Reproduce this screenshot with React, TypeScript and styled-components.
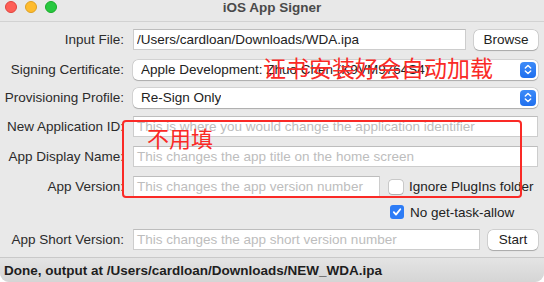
import styled, { createGlobalStyle } from 'styled-components';

const GlobalStyle = createGlobalStyle`
    html, body {
        margin: 0;
        padding: 0;
        background: #ffffff;
    }
    * {
        box-sizing: border-box;
    }
`;

const sysFont = `"Liberation Sans", Arial, sans-serif`;
const cjkFont = `"Noto Sans CJK SC", "Noto Sans", sans-serif`;

const StepperIcon = () => (
    <svg width="8" height="11" viewBox="0 0 8 11">
        <path
            d="M1.3 4 L4 1.4 L6.7 4 M1.3 7 L4 9.6 L6.7 7"
            fill="none"
            stroke="#fff"
            strokeWidth="1.4"
            strokeLinecap="round"
            strokeLinejoin="round"
        />
    </svg>
);

const CheckIcon = () => (
    <svg width="10" height="10" viewBox="0 0 10 10">
        <path
            d="M1.8 5.2 L4 7.6 L8.3 2.2"
            fill="none"
            stroke="#fff"
            strokeWidth="1.8"
            strokeLinecap="round"
            strokeLinejoin="round"
        />
    </svg>
);

const App = () => {
    return (
        <>
            <GlobalStyle />
            <Window>
                <TitleBar>
                    <Lights>
                        <Light $color="#fe5f57" $border="#e0443e" />
                        <Light $color="#febc2e" $border="#dea123" />
                        <Light $color="#28c840" $border="#1aab29" />
                    </Lights>
                    <Title>iOS App Signer</Title>
                </TitleBar>
                <Form>
                    <Row $top={7}>
                        <Label>Input File:</Label>
                        <Field>
                            <TextInput>
                                <Value>/Users/cardloan/Downloads/WDA.ipa</Value>
                            </TextInput>
                            <Button $width={64}>Browse</Button>
                        </Field>
                    </Row>
                    <Row $top={9}>
                        <Label>Signing Certificate:</Label>
                        <Field>
                            <Select>
                                <Value>Apple Development: Zhuo Chen (K9VM9764S4)</Value>
                                <Stepper>
                                    <StepperIcon />
                                </Stepper>
                            </Select>
                        </Field>
                    </Row>
                    <Row $top={7}>
                        <Label>Provisioning Profile:</Label>
                        <Field>
                            <Select>
                                <Value>Re-Sign Only</Value>
                                <Stepper>
                                    <StepperIcon />
                                </Stepper>
                            </Select>
                        </Field>
                    </Row>
                    <Row $top={8}>
                        <Label>New Application ID:</Label>
                        <Field>
                            <TextInput>
                                <Placeholder>
                                    This is where you would change the application identifier
                                </Placeholder>
                            </TextInput>
                        </Field>
                    </Row>
                    <Row $top={9}>
                        <Label>App Display Name:</Label>
                        <Field>
                            <TextInput>
                                <Placeholder>This changes the app title on the home screen</Placeholder>
                            </TextInput>
                        </Field>
                    </Row>
                    <Row $top={9}>
                        <Label>App Version:</Label>
                        <Field>
                            <TextInput $width={247}>
                                <Placeholder>This changes the app version number</Placeholder>
                            </TextInput>
                            <CheckRow $indent={1}>
                                <Checkbox />
                                <CheckText>Ignore PlugIns folder</CheckText>
                            </CheckRow>
                        </Field>
                    </Row>
                    <Row $top={7} $height={16}>
                        <span />
                        <Field>
                            <CheckRow $indent={257}>
                                <Checkbox $checked>
                                    <CheckIcon />
                                </Checkbox>
                                <CheckText>No get-task-allow</CheckText>
                            </CheckRow>
                        </Field>
                    </Row>
                    <Row $top={9}>
                        <Label>App Short Version:</Label>
                        <Field>
                            <TextInput>
                                <Placeholder>This changes the app short version number</Placeholder>
                            </TextInput>
                            <Button $width={50}>Start</Button>
                        </Field>
                    </Row>
                </Form>
                <StatusBar>Done, output at /Users/cardloan/Downloads/NEW_WDA.ipa</StatusBar>

                <NoteBox />
                <NoteText $left={147} $top={124} $size={22}>
                    不用填
                </NoteText>
                <NoteText $left={263} $top={54} $size={23}>
                    证书安装好会自动加载
                </NoteText>
            </Window>
        </>
    );
};

export default App;

const Window = styled.div`
    position: relative;
    width: 544px;
    height: 282px;
    background: #e9e9e9;
    border-bottom-left-radius: 9px;
    border-bottom-right-radius: 9px;
    overflow: hidden;
    display: flex;
    flex-direction: column;
    font-family: ${sysFont};
    font-size: 13.5px;
    color: #2a2a2a;
`;

const TitleBar = styled.div`
    position: relative;
    height: 22px;
    flex-shrink: 0;
    display: flex;
    align-items: center;
    justify-content: center;
    border-bottom: 1px solid #d2d2d2;
    background: #e8e8e8;
`;

const Lights = styled.div`
    position: absolute;
    left: 5px;
    top: 1px;
    display: flex;
    gap: 8px;
`;

const Light = styled.div<{ $color: string; $border: string }>`
    width: 12px;
    height: 12px;
    border-radius: 50%;
    background: ${(p) => p.$color};
    border: 0.5px solid ${(p) => p.$border};
`;

const Title = styled.div`
    font-weight: bold;
    font-size: 13.5px;
    color: #4a4a4a;
    margin-top: -6px;
`;

const Form = styled.div`
    flex: 1;
    display: flex;
    flex-direction: column;
    padding-right: 6px;
`;

const Row = styled.div<{ $top: number; $height?: number }>`
    display: grid;
    grid-template-columns: 124px 1fr;
    column-gap: 9px;
    align-items: center;
    height: ${(p) => p.$height ?? 21}px;
    margin-top: ${(p) => p.$top}px;
`;

const Label = styled.div`
    text-align: right;
    white-space: nowrap;
    color: #2b2b2b;
`;

const Field = styled.div`
    display: flex;
    align-items: center;
    gap: 8px;
    height: 100%;
    min-width: 0;
`;

const TextInput = styled.div<{ $width?: number }>`
    ${(p) => (p.$width ? `width: ${p.$width}px;` : 'flex: 1;')}
    height: 21px;
    background: #ffffff;
    border: 1px solid #cdcdcd;
    border-top-color: #bdbdbd;
    display: flex;
    align-items: center;
    padding: 0 3px;
    overflow: hidden;
    white-space: nowrap;
`;

const Value = styled.span`
    color: #222;
    white-space: nowrap;
    overflow: hidden;
`;

const Placeholder = styled.span`
    color: #bdbdbd;
    white-space: nowrap;
`;

const Button = styled.div<{ $width: number }>`
    width: ${(p) => p.$width}px;
    height: 20px;
    flex-shrink: 0;
    background: #ffffff;
    border-radius: 5px;
    box-shadow: 0 0 0 0.5px rgba(0, 0, 0, 0.18), 0 0.5px 1px rgba(0, 0, 0, 0.2);
    display: flex;
    align-items: center;
    justify-content: center;
    color: #222;
`;

const Select = styled.div`
    flex: 1;
    height: 20px;
    background: #ffffff;
    border-radius: 5px;
    box-shadow: 0 0 0 0.5px rgba(0, 0, 0, 0.16), 0 0.5px 1px rgba(0, 0, 0, 0.2);
    display: flex;
    align-items: center;
    justify-content: space-between;
    padding: 0 2px 0 8px;
    overflow: hidden;
`;

const Stepper = styled.div`
    width: 16px;
    height: 16px;
    flex-shrink: 0;
    border-radius: 4px;
    background: linear-gradient(#3d8bf8, #1f6fee);
    display: flex;
    align-items: center;
    justify-content: center;
`;

const CheckRow = styled.div<{ $indent: number }>`
    display: flex;
    align-items: center;
    gap: 6px;
    margin-left: ${(p) => p.$indent}px;
`;

const Checkbox = styled.div<{ $checked?: boolean }>`
    width: 14px;
    height: 14px;
    border-radius: 3px;
    display: flex;
    align-items: center;
    justify-content: center;
    background: ${(p) => (p.$checked ? '#2d7cf6' : '#ffffff')};
    box-shadow: ${(p) =>
        p.$checked
            ? 'none'
            : '0 0 0 0.5px rgba(0,0,0,0.25), 0 0.5px 1px rgba(0,0,0,0.15)'};
`;

const CheckText = styled.span`
    color: #222;
    white-space: nowrap;
`;

const StatusBar = styled.div`
    height: 25px;
    flex-shrink: 0;
    border-top: 1px solid #c9c9c9;
    background: linear-gradient(#e4e4e4, #d5d5d5);
    display: flex;
    align-items: center;
    padding-left: 4px;
    font-weight: bold;
    color: #1e1e1e;
    white-space: nowrap;
`;

const NoteBox = styled.div`
    position: absolute;
    left: 122px;
    top: 120px;
    width: 400px;
    height: 78px;
    border: 2.5px solid #fa2a26;
    border-radius: 4px;
`;

const NoteText = styled.div<{ $left: number; $top: number; $size: number }>`
    position: absolute;
    left: ${(p) => p.$left}px;
    top: ${(p) => p.$top}px;
    font-family: ${cjkFont};
    font-size: ${(p) => p.$size}px;
    line-height: 1.2;
    color: #fa2a26;
    white-space: nowrap;
`;
